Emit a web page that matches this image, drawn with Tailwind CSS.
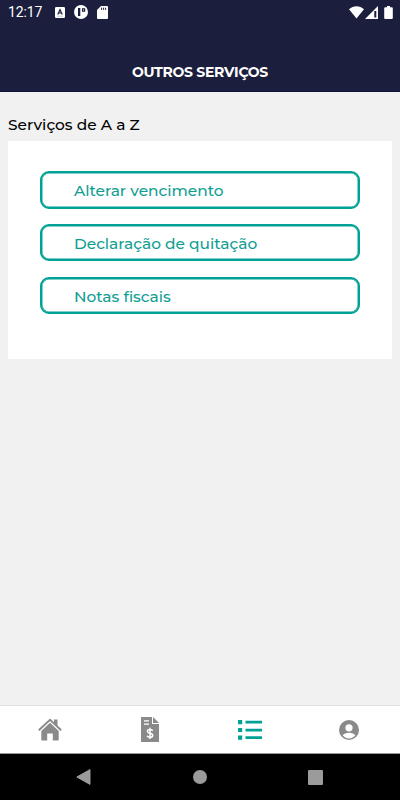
<!DOCTYPE html>
<html lang="pt-BR">
<head>
    <meta charset="UTF-8">
    <meta name="viewport" content="width=device-width, initial-scale=1.0">
    <title>Outros serviços</title>
    <script src="https://cdn.jsdelivr.net/npm/@tailwindcss/browser@4"></script>
</head>
<body class="h-screen flex flex-col overflow-hidden bg-[#f1f1f1] font-['Montserrat','Inter',sans-serif]">
    <header class="h-[91.5px] shrink-0 flex flex-col bg-[#1b1e3c] text-white border-b border-[#10123a]">
        <!-- Status bar -->
        <div class="h-6 flex items-center justify-between pl-2 pr-[7px]">
            <div class="flex items-center">
                <span class="w-[47px] font-['Roboto',sans-serif] text-[14px] leading-6 tracking-[-0.1px]">12:17</span>
                <svg class="w-[10px] h-[11px]" viewBox="0 0 10 11">
                    <rect width="10" height="11" rx="1.2" fill="#fff"/>
                    <path d="M2.8 7.4 5 2.6l2.2 4.8M3.6 6h2.8" fill="none" stroke="#1b1e3c" stroke-width="1.2"/>
                    <path d="M2 9.2h6" stroke="#b9bac4" stroke-width=".7"/>
                </svg>
                <svg class="ml-[9px] w-[14px] h-[14px]" viewBox="0 0 14 14">
                    <circle cx="7" cy="7" r="7" fill="#fff"/>
                    <path d="M4 3h2.300v8H4zM8 3.200h3.200v3.600H8z" fill="#1b1e3c"/>
                    <path d="M9 4.400h1v1.200H9z" fill="#fff"/>
                </svg>
                <svg class="ml-[9px] w-[11px] h-[13px]" viewBox="0 0 11 13">
                    <path d="M4 0h6a1 1 0 0 1 1 1v11a1 1 0 0 1-1 1H1a1 1 0 0 1-1-1V4z" fill="#fff"/>
                    <path d="M4.6 1.7v2.2M6.6 1.7v2.2M8.6 1.7v2.2" stroke="#1b1e3c" stroke-width="1"/>
                </svg>
            </div>
            <div class="flex items-center">
                <svg class="w-[15px] h-[13px]" viewBox="0 0 15 13">
                    <path d="M0 3.2C4.4-.8 10.600-.8 15 3.200L7.500 12.600z" fill="#fff"/>
                </svg>
                <svg class="ml-[1px] w-[13px] h-[13px]" viewBox="0 0 13 13">
                    <path d="M13 0v13H0z" fill="#fff"/>
                    <path d="M9.300 5h2v6.500h-2z" fill="#1b1e3c"/>
                </svg>
                <svg class="ml-[6px] w-[9px] h-[13px]" viewBox="0 0 9 13">
                    <path d="M3 0h3v1.300h1.800a1 1 0 0 1 1 1V12a1 1 0 0 1-1 1H1.200a1 1 0 0 1-1-1V2.300a1 1 0 0 1 1-1H3z" fill="#fff"/>
                </svg>
            </div>
        </div>
        <h1 class="mt-9 text-center text-[14px] leading-6 font-bold tracking-[-0.28px]">OUTROS SERVIÇOS</h1>
    </header>

    <main class="flex-1 px-2 pt-[21.5px]">
        <h2 class="h-7 text-[15.4px] leading-6 font-medium text-black">Serviços de A a Z</h2>
        <div class="h-[218px] bg-white px-8 pt-[30px] flex flex-col gap-[15.2px]">
            <button class="h-[37.6px] shrink-0 rounded-[9px] border-2 border-[#00a295] inset-ring-[0.5px] inset-ring-[#00a295] pl-8 pt-0.5 text-left text-[15.4px] font-medium text-[#109e92]">Alterar vencimento</button>
            <button class="h-[37.6px] shrink-0 rounded-[9px] border-2 border-[#00a295] inset-ring-[0.5px] inset-ring-[#00a295] pl-8 pt-0.5 text-left text-[15.4px] font-medium text-[#109e92]">Declaração de quitação</button>
            <button class="h-[37.6px] shrink-0 rounded-[9px] border-2 border-[#00a295] inset-ring-[0.5px] inset-ring-[#00a295] pl-8 pt-0.5 text-left text-[15.4px] font-medium text-[#109e92]">Notas fiscais</button>
        </div>
    </main>

    <!-- Tabs -->
    <nav class="h-[49px] shrink-0 grid grid-cols-4 bg-white border-t border-[#e0e0e0] border-b border-b-[#999]">
        <a href="#" aria-label="Início" class="flex items-center justify-center">
            <svg class="w-6 h-6" viewBox="0 0 24 24" fill="#8a8a8a">
                <path d="M16 1.500h3.500v7L16 5z"/>
                <path d="M.8 12.200 12 1.800l11.200 10.400" fill="none" stroke="#8a8a8a" stroke-width="1.900"/>
                <path d="M12 4.800 3.300 13v8.700a.8.8 0 0 0 .8.8H9.200v-7h5.600v7h5.100a.8.8 0 0 0 .8-.8V13z"/>
            </svg>
        </a>
        <a href="#" aria-label="Faturas" class="flex items-center justify-center">
            <svg class="w-[18px] h-[25px]" viewBox="0 0 18 25">
                <path d="M0 0h11v7h7v18H0z" fill="#8a8a8a"/>
                <path d="M12 0v6h6z" fill="#8a8a8a"/>
                <path d="M3 3.800h5M3 7.200h5" stroke="#fff" stroke-width="1.300"/>
                <path d="M11.700 13.800c-.5-1-1.500-1.300-2.700-1.300-1.600 0-2.600.7-2.600 1.800 0 2.700 5.300 1.300 5.300 4.100 0 1.200-1.100 1.900-2.700 1.900-1.400 0-2.500-.5-2.900-1.600M9 10.800v11.300" fill="none" stroke="#fff" stroke-width="1.500"/>
            </svg>
        </a>
        <a href="#" aria-label="Serviços" class="flex items-center justify-center">
            <svg class="w-6 h-5" viewBox="0 0 24 20" fill="#00a295">
                <path d="M0 0h4.200v4.200H0zM0 7.900h4.200v4.200H0zM0 15.500h4.200v4.200H0zM7.500.8H24v2.700H7.500zM7.500 8.700H24v2.700H7.500zM7.500 16.300H24V19H7.500z"/>
            </svg>
        </a>
        <a href="#" aria-label="Perfil" class="flex items-center justify-center pr-[2px]">
            <svg class="w-5 h-5" viewBox="0 0 20 20">
                <circle cx="10" cy="10" r="10" fill="#8a8a8a"/>
                <circle cx="10" cy="7.800" r="3.600" fill="#fff"/>
                <path d="M3.700 15.300c1.200-1.700 3.500-2.600 6.300-2.600s5.100.9 6.300 2.600c-1.300 1.900-3.600 3.100-6.300 3.100s-5-1.200-6.300-3.100z" fill="#fff"/>
            </svg>
        </a>
    </nav>

    <!-- System buttons -->
    <div class="h-[46px] shrink-0 bg-black flex items-center justify-between pl-[76px] pr-[77px]">
        <svg class="w-[15px] h-4" viewBox="0 0 15 16"><path d="M14 .6v14.800L.8 8z" fill="#9b9b9b" stroke="#9b9b9b" stroke-linejoin="round"/></svg>
        <span class="w-[14px] h-[14px] rounded-full bg-[#9b9b9b]"></span>
        <span class="w-[15px] h-[15px] rounded-[1px] bg-[#9b9b9b]"></span>
    </div>
</body>
</html>
